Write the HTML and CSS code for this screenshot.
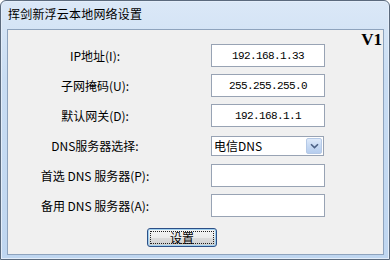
FILE: index.html
```html
<!DOCTYPE html>
<html lang="zh-CN">
<head>
    <meta charset="UTF-8">
    <title>挥剑新浮云本地网络设置</title>
    <link rel="stylesheet" href="styles.css">
</head>
<body>
    <div class="window">
        <div class="titlebar">挥剑新浮云本地网络设置</div>
        <div class="client">
            <div class="version">V1</div>
            <div class="form">
                <label class="label" for="ip">IP地址(I):</label>
                <input class="field" id="ip" type="text" value="192.168.1.33">

                <label class="label" for="mask">子网掩码(U):</label>
                <input class="field" id="mask" type="text" value="255.255.255.0">

                <label class="label" for="gateway">默认网关(D):</label>
                <input class="field" id="gateway" type="text" value="192.168.1.1">

                <div class="label">DNS服务器选择:</div>
                <div class="select">
                    <span class="select-text">电信DNS</span>
                    <span class="select-arrow">
                        <svg width="9" height="6" viewBox="0 0 9 6">
                            <path d="M1 1.2 L4.5 4.6 L8 1.2" fill="none" stroke="#4d6185" stroke-width="1.6"/>
                        </svg>
                    </span>
                </div>

                <label class="label" for="dns1">首选 DNS 服务器(P):</label>
                <input class="field" id="dns1" type="text" value="">

                <label class="label" for="dns2">备用 DNS 服务器(A):</label>
                <input class="field" id="dns2" type="text" value="">
            </div>
            <div class="actions">
                <button class="button"><span class="button-focus">设置</span></button>
            </div>
        </div>
    </div>
</body>
</html>
```

FILE: styles.css
```css
* {
    margin: 0;
    box-sizing: border-box;
}

body {
    width: 390px;
    height: 260px;
    background-color: #ffffff;
    font-family: "Noto Sans CJK SC", "DejaVu Sans", sans-serif;
    font-size: 12px;
    color: #000000;
}

.window {
    width: 390px;
    height: 260px;
    border: 1px solid #5b6a7d;
    border-radius: 6px 6px 0 0;
    background: linear-gradient(to bottom, #dbe8f7 0%, #c9ddf3 30%, #bfd6f0 100%);
    box-shadow: inset 0 0 0 1px #e4eefa;
    padding: 0 5px 4px 6px;
    display: flex;
    flex-direction: column;
}

.titlebar {
    height: 28px;
    padding: 5px 0 0 1px;
    line-height: 16px;
    letter-spacing: 0.2px;
    color: #000000;
}

.client {
    position: relative;
    flex: 1;
    border: 1px solid #8ea3bd;
    background-color: #f0f0f0;
    padding-top: 14px;
}

.version {
    position: absolute;
    top: 0;
    right: 1px;
    font-family: "Liberation Serif", serif;
    font-weight: bold;
    font-size: 17px;
    line-height: 20px;
}

.form {
    display: grid;
    grid-template-columns: 174px 114px;
    grid-auto-rows: 23px;
    column-gap: 29px;
    row-gap: 7px;
    align-items: center;
}

.label {
    text-align: center;
    line-height: 16px;
}

.field {
    height: 23px;
    width: 114px;
    border: 1px solid #98a3b4;
    background-color: #ffffff;
    text-align: center;
    font-family: "Liberation Mono", monospace;
    font-size: 11px;
    letter-spacing: -0.6px;
    color: #000000;
    padding: 0;
    outline: none;
}

.select {
    height: 20px;
    width: 113px;
    border: 1px solid #98a3b4;
    background-color: #ffffff;
    display: flex;
    align-items: center;
    justify-content: space-between;
    padding: 0 1px 0 2px;
}

.select-text {
    line-height: 16px;
}

.select-arrow {
    width: 16px;
    height: 16px;
    border: 1px solid #b5c9e6;
    border-radius: 2px;
    background: linear-gradient(to bottom, #dfeafa 0%, #c6d9f3 50%, #b6cdee 100%);
    display: flex;
    align-items: center;
    justify-content: center;
}

.actions {
    padding: 11px 0 0 139px;
}

.button {
    width: 70px;
    height: 19px;
    border: 1px solid #2d4f86;
    border-radius: 3px;
    background: linear-gradient(to bottom, #f6f6f6 0%, #ebebeb 50%, #dddddd 51%, #cfcfcf 100%);
    box-shadow: inset 0 0 0 1px #9fd0f0;
    padding: 2px;
    font-family: "Noto Sans CJK SC", sans-serif;
    font-size: 12px;
    color: #000000;
}

.button-focus {
    display: block;
    height: 13px;
    border: 1px dotted #202020;
    line-height: 11px;
}
```
